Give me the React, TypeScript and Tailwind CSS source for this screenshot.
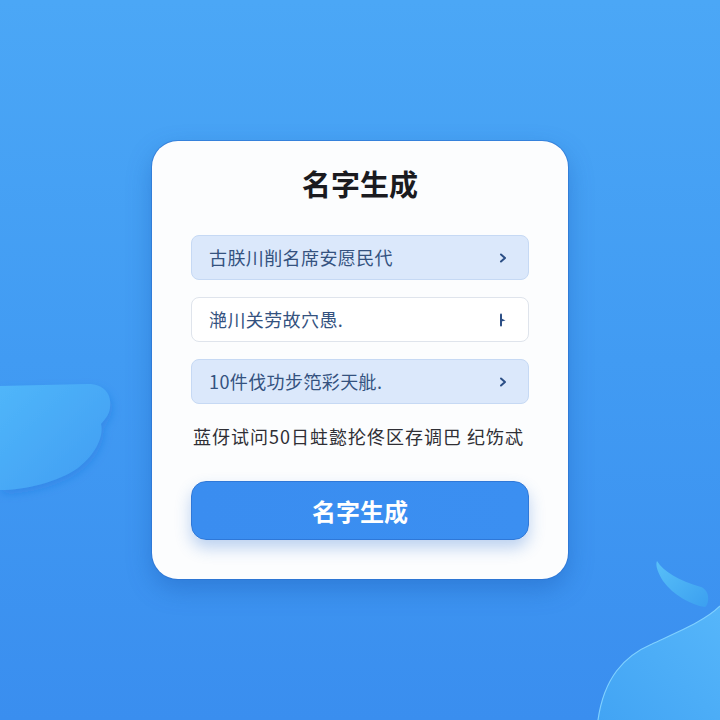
import React from 'react';

const options = [
    { label: '古朕川削名席安愿民代', active: true, icon: 'chevron' },
    { label: '滟川关劳故穴愚.', active: false, icon: 'tick' },
    { label: '10件伐功步笵彩天舭.', active: true, icon: 'chevron' },
];

const Chevron: React.FC<{ kind: string }> = ({ kind }) =>
    kind === 'chevron' ? (
        <svg width="10" height="12" viewBox="0 0 10 12" fill="none">
            <path d="M3 2.5 L7 6 L3 9.5" stroke="#2c4f86" strokeWidth="2" strokeLinecap="round" strokeLinejoin="round" />
        </svg>
    ) : (
        <svg width="10" height="14" viewBox="0 0 10 14" fill="none">
            <path d="M3 1.5 V12.5" stroke="#2c4f86" strokeWidth="2" strokeLinecap="round" />
            <path d="M3.5 5.5 L7.5 7.5 L3.5 8.5 Z" fill="#2c4f86" />
        </svg>
    );

const App: React.FC = () => {
    return (
        <div
            className="relative h-[720px] w-[720px] overflow-hidden bg-gradient-to-b from-[#4ba7f6] via-[#419bf3] to-[#3a8eef] flex items-center justify-center"
            style={{ fontFamily: '"Noto Sans CJK SC", "Noto Sans", sans-serif' }}
        >
            {/* left cloud blob */}
            <svg className="absolute left-0 top-[378px]" width="130" height="125" viewBox="0 0 130 125">
                <defs>
                    <linearGradient id="blobL" x1="0" y1="0" x2="1" y2="1">
                        <stop offset="0" stopColor="#50b6fa" />
                        <stop offset="1" stopColor="#3f9cf2" />
                    </linearGradient>
                    <filter id="softL" x="-20%" y="-20%" width="140%" height="140%">
                        <feDropShadow dx="2" dy="4" stdDeviation="4" floodColor="#1f6fd6" floodOpacity="0.35" />
                    </filter>
                </defs>
                <path
                    d="M0 8 L88 6 C104 6 112 16 110 30 C109 38 104 42 101 46 C104 58 96 76 78 90 C58 104 26 112 0 112 Z"
                    fill="url(#blobL)"
                    filter="url(#softL)"
                />
            </svg>

            {/* bottom right wave and leaf */}
            <svg className="absolute right-0 bottom-0" width="130" height="170" viewBox="0 0 130 170">
                <defs>
                    <linearGradient id="waveR" x1="0" y1="1" x2="1" y2="0">
                        <stop offset="0" stopColor="#42a4f4" />
                        <stop offset="1" stopColor="#56b6fa" />
                    </linearGradient>
                    <linearGradient id="leafR" x1="0" y1="0" x2="1" y2="1">
                        <stop offset="0" stopColor="#58c0f8" />
                        <stop offset="1" stopColor="#3b9ff0" />
                    </linearGradient>
                </defs>
                <path d="M8 170 C14 128 34 106 62 94 C92 80 116 70 130 56 L130 170 Z" fill="url(#waveR)" />
                <path d="M8 170 C14 128 34 106 62 94 C92 80 116 70 130 56" fill="none" stroke="#7fd0ff" strokeWidth="1.2" />
                <path
                    transform="translate(11 9)"
                    d="M56 2 C62 12 78 22 100 28 C110 32 108 46 104 48 C90 46 72 36 62 22 C57 14 54 6 56 2 Z"
                    fill="url(#leafR)"
                />
            </svg>

            <div className="relative z-10 w-[416px] h-[438px] rounded-[26px] bg-[#fcfdfe] ring-1 ring-[#2b6fcf]/60 shadow-[0_10px_24px_rgba(20,80,170,0.35)] px-[39px] pt-[24px] flex flex-col">
                <h1 className="text-center text-[29px] leading-[36px] font-bold text-[#1b1b1f]">名字生成</h1>

                <div className="mt-[34px] flex flex-col gap-[17px]">
                    {options.map(opt => (
                        <div
                            key={opt.label}
                            className={`h-[45px] rounded-[8px] border flex items-center justify-between pl-[17px] pr-[20px] ${
                                opt.active ? 'bg-[#dbe8fb] border-[#c6d9f4]' : 'bg-white border-[#dfe4ec]'
                            }`}
                        >
                            <span className="text-[18px] text-[#34527f] tracking-[0.4px]">{opt.label}</span>
                            <Chevron kind={opt.icon} />
                        </div>
                    ))}
                </div>

                <p className="mt-[20px] text-[18px] leading-[24px] text-[#2f2f35] whitespace-nowrap pl-[2px] tracking-[1px]">
                    蓝伢试问50日蛀懿抡佟区存调巴 纪饬忒
                </p>

                <button className="mt-[33px] h-[59px] w-full rounded-[15px] bg-gradient-to-r from-[#3a8df0] to-[#3b8ff1] border border-[#2f78d8] shadow-[0_8px_16px_rgba(40,110,210,0.3)] text-white text-[24px] font-bold">
                    名字生成
                </button>
            </div>
        </div>
    );
};

export default App;
